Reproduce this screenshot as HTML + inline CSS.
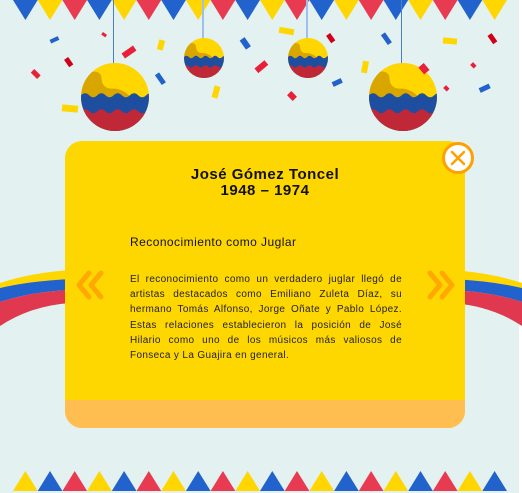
<!DOCTYPE html>
<html><head><meta charset="utf-8"><style>
html,body{margin:0;padding:0}
body{width:522px;height:493px;overflow:hidden;background:#e3f1f0;position:relative;font-family:"Liberation Sans",sans-serif}
svg.bg{position:absolute;left:0;top:0}
.card{position:absolute;left:65px;top:141px;width:400px;height:287px;border-radius:17px;background:#ffd700;overflow:hidden}
.card .foot{position:absolute;left:0;right:0;bottom:0;height:28px;background:#ffbe4f}
h1{position:absolute;left:0;right:0;top:26px;margin:0;text-align:center;font-size:15px;line-height:16px;font-weight:bold;color:#111;letter-spacing:0.5px}
h2{position:absolute;left:65px;top:94px;margin:0;font-size:12px;font-weight:normal;color:#111;letter-spacing:0.45px}
p{position:absolute;left:65px;top:131px;width:272px;margin:0;font-size:10px;letter-spacing:0.35px;line-height:15.2px;text-align:justify;color:#222}
.close{position:absolute;left:442px;top:142px;width:26px;height:26px;border-radius:50%;background:#fff;border:3.5px solid #ffa000}
</style></head><body>
<svg class="bg" width="522" height="493" viewBox="0 0 522 493">
<defs>
<clipPath id="c"><circle cx="0" cy="0" r="1"/></clipPath>
<g id="p"><g clip-path="url(#c)">
<rect x="-1" y="-1" width="2" height="2" fill="#ffd600"/>
<path d="M-1 -0.6 Q-0.5 -0.9 -0.4 -0.6 Q-0.4 -0.2 0 -0.25 Q0.3 -0.2 0.45 0 L1 0.1 L1 1 L-1 1Z" fill="#d9a600"/>
<path d="M-1 -0.05 q0.12 -0.12 0.24 0 t0.24 0 t0.24 0 t0.24 0 t0.24 0 t0.24 0 t0.24 0 t0.24 0 t0.24 0 L1.2 1 L-1 1Z" fill="#1e4ea0"/>
<path d="M-1 0.42 q0.12 -0.12 0.24 0 t0.24 0 t0.24 0 t0.24 0 t0.24 0 t0.24 0 t0.24 0 t0.24 0 t0.24 0 L1.2 1 L-1 1Z" fill="#c02838"/>
</g></g>
</defs>
<rect x="519" y="0" width="3" height="493" fill="#fff"/>
<g id="flags">
<polygon points="13,0 37.7,0 25.4,20" fill="#2162cc"/>
<polygon points="37.7,0 62.4,0 50,20" fill="#ffd600"/>
<polygon points="62.4,0 87.1,0 74.7,20" fill="#e83a50"/>
<polygon points="87.1,0 111.8,0 99.4,20" fill="#2162cc"/>
<polygon points="111.8,0 136.5,0 124.1,20" fill="#ffd600"/>
<polygon points="136.5,0 161.2,0 148.8,20" fill="#e83a50"/>
<polygon points="161.2,0 185.9,0 173.5,20" fill="#2162cc"/>
<polygon points="185.9,0 210.6,0 198.2,20" fill="#ffd600"/>
<polygon points="210.6,0 235.3,0 222.9,20" fill="#e83a50"/>
<polygon points="235.3,0 260,0 247.6,20" fill="#2162cc"/>
<polygon points="260,0 284.7,0 272.3,20" fill="#ffd600"/>
<polygon points="284.7,0 309.4,0 297,20" fill="#e83a50"/>
<polygon points="309.4,0 334.1,0 321.7,20" fill="#2162cc"/>
<polygon points="334.1,0 358.8,0 346.4,20" fill="#ffd600"/>
<polygon points="358.8,0 383.5,0 371.1,20" fill="#e83a50"/>
<polygon points="383.5,0 408.2,0 395.8,20" fill="#2162cc"/>
<polygon points="408.2,0 432.9,0 420.5,20" fill="#ffd600"/>
<polygon points="432.9,0 457.6,0 445.2,20" fill="#e83a50"/>
<polygon points="457.6,0 482.3,0 469.9,20" fill="#2162cc"/>
<polygon points="482.3,0 507,0 494.6,20" fill="#ffd600"/>
</g>
<g id="tri">
<polygon points="13,491 37.7,491 25.4,471" fill="#ffd600"/>
<polygon points="37.7,491 62.4,491 50,471" fill="#2162cc"/>
<polygon points="62.4,491 87.1,491 74.7,471" fill="#e83a50"/>
<polygon points="87.1,491 111.8,491 99.4,471" fill="#ffd600"/>
<polygon points="111.8,491 136.5,491 124.1,471" fill="#2162cc"/>
<polygon points="136.5,491 161.2,491 148.8,471" fill="#e83a50"/>
<polygon points="161.2,491 185.9,491 173.5,471" fill="#ffd600"/>
<polygon points="185.9,491 210.6,491 198.2,471" fill="#2162cc"/>
<polygon points="210.6,491 235.3,491 222.9,471" fill="#e83a50"/>
<polygon points="235.3,491 260,491 247.6,471" fill="#ffd600"/>
<polygon points="260,491 284.7,491 272.3,471" fill="#2162cc"/>
<polygon points="284.7,491 309.4,491 297,471" fill="#e83a50"/>
<polygon points="309.4,491 334.1,491 321.7,471" fill="#ffd600"/>
<polygon points="334.1,491 358.8,491 346.4,471" fill="#2162cc"/>
<polygon points="358.8,491 383.5,491 371.1,471" fill="#e83a50"/>
<polygon points="383.5,491 408.2,491 395.8,471" fill="#ffd600"/>
<polygon points="408.2,491 432.9,491 420.5,471" fill="#2162cc"/>
<polygon points="432.9,491 457.6,491 445.2,471" fill="#e83a50"/>
<polygon points="457.6,491 482.3,491 469.9,471" fill="#ffd600"/>
<polygon points="482.3,491 507,491 494.6,471" fill="#2162cc"/>
</g>
<g stroke="#4a7fcf" stroke-width="1">
<line x1="113.5" y1="0" x2="113.5" y2="66"/><line x1="203" y1="0" x2="203" y2="40" stroke="#9ec0ea" stroke-width="2"/>
<line x1="307" y1="0" x2="307" y2="40" stroke="#9ec0ea" stroke-width="2"/><line x1="401.5" y1="0" x2="401.5" y2="66"/>
</g>
<use href="#p" transform="translate(115,97) scale(34)"/>
<use href="#p" transform="translate(403,97) scale(34)"/>
<use href="#p" transform="translate(204,58) scale(20)"/>
<use href="#p" transform="translate(308,58) scale(20)"/>
<g>
<rect x="50" y="38" width="9" height="4" fill="#2162cc" transform="rotate(-25 54 40)"/>
<rect x="102" y="33" width="5" height="3" fill="#e8203a" transform="rotate(35 104 34)"/>
<rect x="122" y="49" width="14" height="6" fill="#e8203a" transform="rotate(-35 129 52)"/>
<rect x="158" y="40" width="6" height="10" fill="#ffd600" transform="rotate(15 161 45)"/>
<rect x="66" y="58" width="5" height="9" fill="#d00018" transform="rotate(-35 68 62)"/>
<rect x="33" y="70" width="5" height="9" fill="#e8203a" transform="rotate(-45 35 74)"/>
<rect x="158" y="73" width="5" height="12" fill="#2162cc" transform="rotate(-35 160 79)"/>
<rect x="62" y="105" width="16" height="7" fill="#ffd600" transform="rotate(5 70 108)"/>
<rect x="242" y="38" width="6" height="11" fill="#2162cc" transform="rotate(-35 245 43)"/>
<rect x="279" y="28" width="15" height="6" fill="#ffd600" transform="rotate(10 286 31)"/>
<rect x="255" y="64" width="13" height="6" fill="#e8203a" transform="rotate(-40 261 67)"/>
<rect x="213" y="86" width="6" height="12" fill="#ffd600" transform="rotate(15 216 92)"/>
<rect x="289" y="92" width="6" height="8" fill="#e8203a" transform="rotate(-45 292 96)"/>
<rect x="328" y="34" width="5" height="9" fill="#d00018" transform="rotate(-35 330 38)"/>
<rect x="332" y="80" width="10" height="5" fill="#2162cc" transform="rotate(-25 337 82)"/>
<rect x="362" y="61" width="6" height="12" fill="#ffd600" transform="rotate(10 365 67)"/>
<rect x="384" y="33" width="5" height="12" fill="#2162cc" transform="rotate(-35 386 39)"/>
<rect x="443" y="38" width="14" height="6" fill="#ffd600" transform="rotate(5 450 41)"/>
<rect x="420" y="64" width="7" height="9" fill="#e8203a" transform="rotate(-40 424 68)"/>
<rect x="490" y="34" width="5" height="10" fill="#d00018" transform="rotate(-35 492 39)"/>
<rect x="471" y="63" width="4" height="5" fill="#e8203a" transform="rotate(-45 473 65)"/>
<rect x="444" y="86" width="4" height="5" fill="#e8203a" transform="rotate(-45 446 88)"/>
<rect x="479" y="86" width="11" height="5" fill="#2162cc" transform="rotate(-25 484 88)"/>
</g>
<path d="M0 283 Q30 273 70 270 L70 279 Q30 281 0 288Z" fill="#ffd600"/>
<path d="M0 288 Q30 281 70 279 L70 290 Q30 292 0 302Z" fill="#2162cc"/>
<path d="M0 302 Q30 292 70 290 L70 303 Q30 306 0 326Z" fill="#e0384e"/>
<path d="M522 283 Q492 273 452 270 L452 279 Q492 281 522 288Z" fill="#ffd600"/>
<path d="M522 288 Q492 281 452 279 L452 290 Q492 292 522 302Z" fill="#2162cc"/>
<path d="M522 302 Q492 292 452 290 L452 303 Q492 306 522 326Z" fill="#e0384e"/>
</svg>
<div class="card">
<h1>José Gómez Toncel<br>1948 – 1974</h1>
<h2>Reconocimiento como Juglar</h2>
<p>El reconocimiento como un verdadero juglar llegó de artistas destacados como Emiliano Zuleta Díaz, su hermano Tomás Alfonso, Jorge Oñate y Pablo López. Estas relaciones establecieron la posición de José Hilario como uno de los músicos más valiosos de Fonseca y La Guajira en general.</p>
<div class="foot"></div>
<svg style="position:absolute;left:6px;top:128px" width="36" height="34"><path d="M18 4 L8 16 L18 28 M30 4 L20 16 L30 28" fill="none" stroke="#ffa800" stroke-width="5" stroke-linecap="round" stroke-linejoin="round"/></svg>
<svg style="position:absolute;left:359px;top:128px" width="36" height="34"><path d="M6 4 L16 16 L6 28 M18 4 L28 16 L18 28" fill="none" stroke="#ffa800" stroke-width="5" stroke-linecap="round" stroke-linejoin="round"/></svg>
</div>
<div class="close"><svg width="26" height="26" style="position:absolute;left:0;top:0"><path d="M7 7 L19 19 M19 7 L7 19" stroke="#ffa000" stroke-width="2.5" stroke-linecap="round"/></svg></div>
</body></html>
